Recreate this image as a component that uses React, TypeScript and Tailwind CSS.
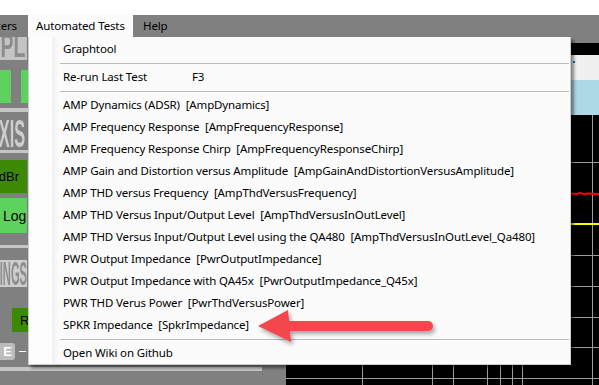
import React from "react";

const items: { name: string; key: string }[] = [
  { name: "AMP Dynamics (ADSR)", key: "[AmpDynamics]" },
  { name: "AMP Frequency Response", key: "[AmpFrequencyResponse]" },
  { name: "AMP Frequency Response Chirp", key: "[AmpFrequencyResponseChirp]" },
  { name: "AMP Gain and Distortion versus Amplitude", key: "[AmpGainAndDistortionVersusAmplitude]" },
  { name: "AMP THD versus Frequency", key: "[AmpThdVersusFrequency]" },
  { name: "AMP THD Versus Input/Output Level", key: "[AmpThdVersusInOutLevel]" },
  { name: "AMP THD Versus Input/Output Level using the QA480", key: "[AmpThdVersusInOutLevel_Qa480]" },
  { name: "PWR Output Impedance", key: "[PwrOutputImpedance]" },
  { name: "PWR Output Impedance with QA45x", key: "[PwrOutputImpedance_Q45x]" },
  { name: "PWR THD Verus Power", key: "[PwrThdVersusPower]" },
  { name: "SPKR Impedance", key: "[SpkrImpedance]" },
];

function Sep() {
  return (
    <div className="h-[6px] flex items-center pl-[8px] pr-[1px]">
      <div className="h-px w-full bg-[#bababa]" />
    </div>
  );
}

function Item({ children }: { children: React.ReactNode }) {
  return (
    <div className="h-[22px] flex items-center pl-[11px] whitespace-pre text-black">{children}</div>
  );
}

function Graph() {
  const vx = [76, 146, 167, 201, 214, 226, 236, 306];
  const hy = [47, 78, 109, 140, 171, 202, 232, 263];
  return (
    <svg width="313" height="270" className="block">
      <rect width="313" height="270" fill="#000" />
      {vx.map((x) => (
        <line key={"v" + x} x1={x + 0.5} y1={0} x2={x + 0.5} y2={270} stroke="#9c9c9c" strokeWidth="1" />
      ))}
      {hy.map((y) => (
        <line key={"h" + y} x1={0} y1={y + 0.5} x2={313} y2={y + 0.5} stroke="#9c9c9c" strokeWidth="1" />
      ))}
      <polyline
        points="0,79 280,79 287,78.5 290,79 294,78 298,79 303,78.6 313,79"
        fill="none"
        stroke="#ff0000"
        strokeWidth="2"
      />
      <line x1={0} y1={109} x2={313} y2={109} stroke="#ffff00" strokeWidth="2" />
    </svg>
  );
}

export default function App() {
  return (
    <div
      className="w-[599px] h-[385px] overflow-hidden relative bg-white text-[11.5px] tracking-[-0.13px] leading-none"
      style={{ fontFamily: '"Noto Sans", "Open Sans", sans-serif' }}
    >
      {/* title strip */}
      <div className="h-[15px] overflow-hidden bg-white">
        <div className="mt-[-10px] ml-[-6px] text-[#333] text-[12px] leading-[12px]">0.97</div>
      </div>

      {/* menu bar */}
      <div className="h-[22px] bg-[#808080] flex items-stretch text-black">
        <div className="w-[28px] overflow-hidden flex items-center justify-end pr-[11px] whitespace-nowrap">
          <span>Analyzers</span>
        </div>
        <div className="w-[105px] bg-[#fbfbfb] flex items-center pl-[8px] whitespace-nowrap">Automated Tests</div>
        <div className="flex items-center pl-[10px]">Help</div>
      </div>

      {/* body */}
      <div className="flex h-[348px]">
        {/* left panel */}
        <div
          className="w-[286px] bg-[#808080] flex flex-col overflow-hidden tracking-normal"
          style={{ fontFamily: '"Liberation Sans", Arial, sans-serif' }}
        >
          <div className="h-[23px] w-[27px] bg-[#c4c4c4] overflow-hidden">
            <span className="inline-block ml-[-30px] origin-left scale-x-[0.575] text-[34px] font-bold text-[#8c8c8c] leading-[17px] whitespace-nowrap">
              AMPLITUDE
            </span>
          </div>
          <div className="h-[10px]" />
          <div className="h-[33px] flex gap-[10px]">
            <div className="w-[11px] bg-[#5dd25d]" />
            <div className="w-[40px] bg-[#5dd25d]" />
          </div>
          <div className="h-[5px]" />
          <div className="h-[4px] w-[260px] bg-[#c6c6c6]" />
          <div className="h-[5px]" />
          <div className="h-[33px] w-[27px] overflow-hidden">
            <span className="inline-block ml-[-13px] origin-left scale-x-[0.42] text-[39px] font-bold text-[#cdcdcd] leading-[33px] whitespace-nowrap">
              AXIS
            </span>
          </div>
          <div className="h-[3px] w-[260px] bg-[#c6c6c6]" />
          <div className="h-[7px]" />
          <div className="h-[33px] w-[27px] bg-[#3c8a04] flex items-center justify-end pr-[8px] text-[13px] text-black whitespace-nowrap">
            dBr
          </div>
          <div className="h-[5px]" />
          <div className="h-[35px] w-[27px] bg-[#5dd25d] flex items-center pl-[3px] text-[14px] text-black whitespace-nowrap">
            Log
          </div>
          <div className="h-[12px]" />
          <div className="h-[3px] w-[260px] bg-[#c6c6c6]" />
          <div className="h-[12px]" />
          <div className="h-[27px] w-[27px] bg-[#cdcdcd] overflow-hidden">
            <span className="inline-block ml-[-29px] origin-left scale-x-[0.33] text-[34px] font-bold text-[#8e8e8e] leading-[27px] whitespace-nowrap">
              SETTINGS
            </span>
          </div>
          <div className="h-[21px]" />
          <div className="h-[24px] ml-[12px] w-[40px] bg-[#3c8a04] flex items-center pl-[8px] text-[13px] text-black">R</div>
          <div className="h-[11px]" />
          <div className="h-[17px] flex items-center">
            <div className="w-[15px] h-[17px] bg-[#bcbcbc] rounded-r-[3px] flex items-center justify-end pr-[3px] text-white text-[13px] font-bold">
              E
            </div>
            <div className="ml-[4px] w-[7px] h-px bg-white" />
          </div>
          <div className="h-[7px]" />
          <div className="h-[4px] w-[262px] bg-[#c6c6c6]" />
        </div>

        {/* right panel */}
        <div className="flex-1 flex flex-col bg-[#808080]">
          <div className="h-[6px]" />
          <div className="h-[12px] bg-black" />
          <div className="h-[25px] bg-[#f0f0f0] pt-[6px]">
            <div className="ml-[287px] w-[2px] h-[2px] bg-[#1e64c8]" />
          </div>
          <div className="h-[35px] bg-[#add8e6]" />
          <div className="flex-1">
            <Graph />
          </div>
        </div>
      </div>

      {/* dropdown menu */}
      <div className="absolute left-[28px] top-[37px] w-[543px] h-[328px] border border-t-0 border-[#cccccc] bg-[#fbfbfb] shadow-[3px_3px_3px_rgba(0,0,0,0.45)] flex">
        <div className="w-[23px] bg-[#fdfdfd]" />
        <div className="flex-1 pt-px bg-[linear-gradient(to_right,#f1f1f1_0px,#fbfbfb_7px)]">
          <Item>Graphtool</Item>
          <Sep />
          <Item>
            <span className="w-[129px]">Re-run Last Test</span>
            <span>F3</span>
          </Item>
          <Sep />
          {items.map((it) => (
            <Item key={it.key}>{it.name + "  " + it.key}</Item>
          ))}
          <Sep />
          <Item>Open Wiki on Github</Item>
        </div>
      </div>

      {/* red arrow annotation */}
      <svg className="absolute left-[250px] top-[300px]" width="200" height="56">
        <defs>
          <filter id="sh" x="-10%" y="-30%" width="130%" height="180%">
            <feDropShadow dx="2" dy="3" stdDeviation="2" floodColor="#000" floodOpacity="0.35" />
          </filter>
        </defs>
        <g filter="url(#sh)" fill="#f2474d">
          <polygon points="8,26 38,10 41,42" />
          <rect x="34" y="21" width="149" height="10" rx="5" />
        </g>
      </svg>
    </div>
  );
}
